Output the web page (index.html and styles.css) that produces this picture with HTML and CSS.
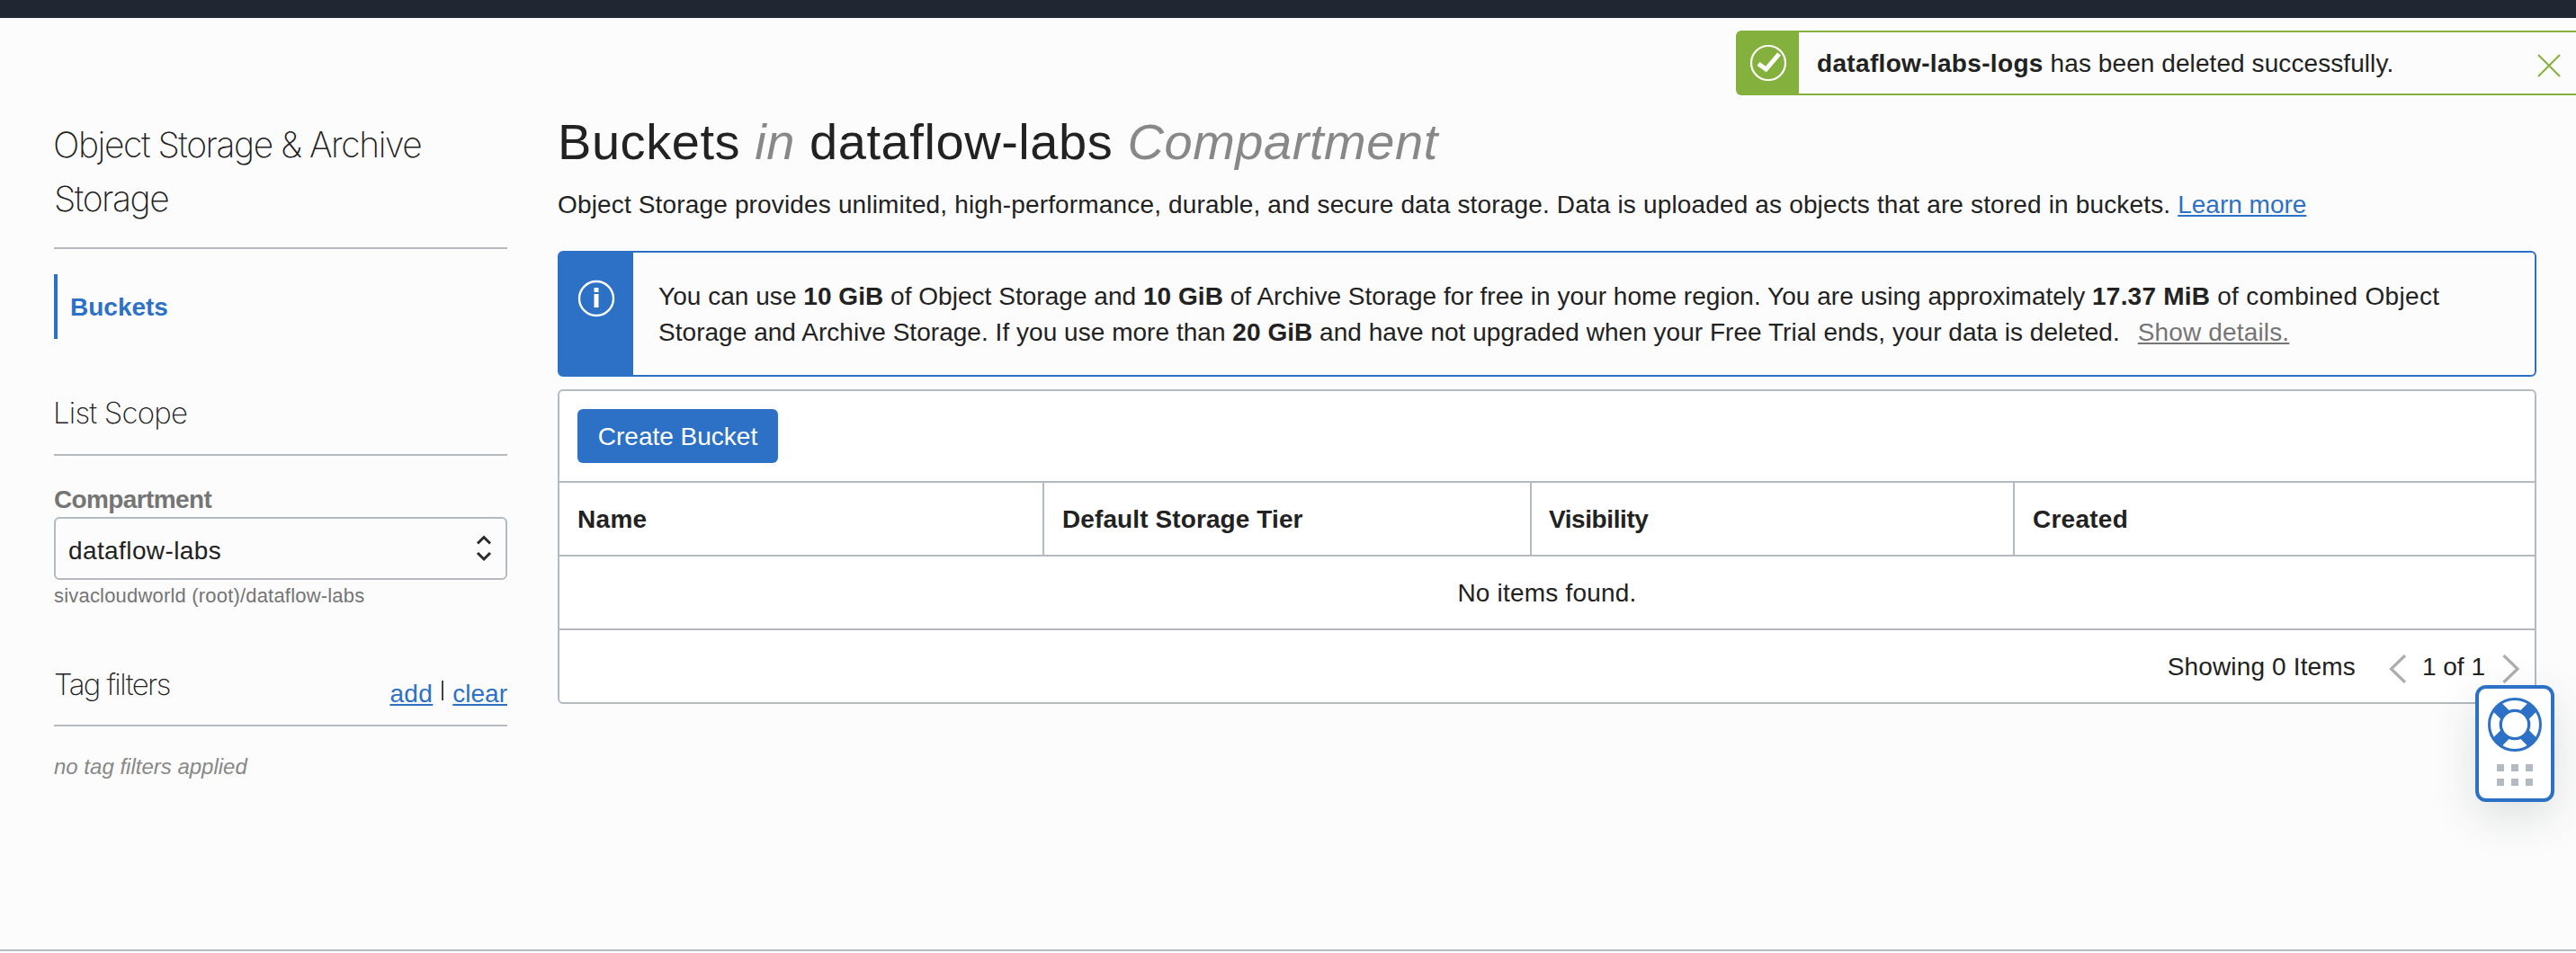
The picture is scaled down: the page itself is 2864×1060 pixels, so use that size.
FILE: index.html
```html
<!DOCTYPE html>
<html lang="en">
<head>
<meta charset="utf-8">
<title>Buckets</title>
<link rel="stylesheet" href="styles.css">
</head>
<body>
<div class="page">
  <header class="topbar"></header>
  <div class="columns">
    <aside class="sidebar">
      <h2 class="service">Object Storage &amp; Archive<br>Storage</h2>
      <nav class="nav"><a class="nav-item">Buckets</a></nav>
      <h3 class="section">List Scope</h3>
      <label class="label">Compartment</label>
      <div class="select"><span class="select-value">dataflow-labs</span>
        <svg class="select-arrows" viewBox="0 0 18 32" width="18" height="32"><path d="M2 10.500 9 3.500l7 7M2 21l7 7 7-7"/></svg>
      </div>
      <p class="path">sivacloudworld (root)/dataflow-labs</p>
      <div class="tags">
        <h3 class="tags-title">Tag filters</h3>
        <div class="tags-links"><a class="link add">add</a><i class="bar"></i><a class="link">clear</a></div>
      </div>
      <p class="note">no tag filters applied</p>
    </aside>
    <main class="main">
      <h1 class="title">Buckets <em>in</em> dataflow-labs <em>Compartment</em></h1>
      <p class="desc"><span class="desc-text">Object Storage provides unlimited, high-performance, durable, and secure data storage. Data is uploaded as objects that are stored in buckets. </span><a class="link">Learn more</a></p>
      <section class="info">
        <div class="info-icon"><svg viewBox="0 0 42 42" width="42" height="42"><circle cx="21" cy="21" r="19" fill="none" stroke="#fff" stroke-width="2.4"/><path fill="#fff" d="M18.500 9h5v5h-5zM18.500 16h5v15h-5z"/></svg></div>
        <p class="info-text">You can use <b>10 GiB</b> of Object Storage and <b>10 GiB</b> of Archive Storage for free in your home region. You are using approximately <b class="usage">17.37 MiB</b><span class="combined"> of combined Object</span><br>Storage and Archive Storage. If you use more than <b>20 GiB</b> and have not upgraded when your Free Trial ends, your data is deleted.<a class="details">Show details.</a></p>
      </section>
      <section class="table">
        <div class="toolbar"><button class="create">Create Bucket</button></div>
        <div class="row head"><div class="cell name">Name</div><div class="cell tier">Default Storage Tier</div><div class="cell visibility">Visibility</div><div class="cell created">Created</div></div>
        <div class="row empty">No items found.</div>
        <div class="row pager"><span class="count">Showing 0 Items</span>
          <svg class="prev" viewBox="0 0 20 32" width="20" height="32"><path d="M18 1 2.500 16 18 31"/></svg>
          <span class="pages">1 of 1</span>
          <svg class="next" viewBox="0 0 20 32" width="20" height="32"><path d="M1.500 1 17 16 1.500 31"/></svg>
        </div>
      </section>
    </main>
  </div>
  <footer class="footer"></footer>
  <div class="toast">
    <div class="toast-icon"><svg viewBox="0 0 42 42" width="42" height="42"><circle cx="21" cy="21" r="19" fill="none" stroke="#fff" stroke-width="2.2"/><path fill="none" stroke="#fff" stroke-width="5" d="m10 22 8.500 6L33 11"/></svg></div>
    <p class="toast-text"><b>dataflow-labs-logs</b> has been deleted successfully.</p>
    <svg class="close" viewBox="0 0 26 26" width="26" height="26"><path d="m1 1 24 24M25 1 1 25"/></svg>
  </div>
  <div class="help">
    <svg viewBox="-30 -30 60 60" width="60" height="60" fill="none" stroke="#2d71c7"><path stroke-width="13.500" d="m-19.500-19.500 39 39M19.500-19.500l-39 39"/><circle r="28.500" stroke-width="3"/><circle r="15.700" fill="#fff" stroke-width="3.300"/></svg>
    <div class="dots"><i></i><i></i><i></i><i></i><i></i><i></i></div>
  </div>
</div>
</body>
</html>
```
FILE: styles.css
```css
* { box-sizing: border-box; margin: 0; padding: 0; }
body { background: #fcfcfc; color: #222; font: 28px/40px "Liberation Sans", Arial, sans-serif; }
.page { position: relative; display: flex; flex-direction: column; height: 1060px; overflow: hidden; }
.topbar { height: 20px; background: #202632; }
.columns { display: grid; grid-template-columns: 504px 2200px; gap: 56px; padding-left: 60px; }
.footer { margin-top: auto; height: 4px; border-top: 2px solid #b4bac1; }
.link { color: #2d71c7; text-decoration: underline; text-decoration-thickness: 2px; text-underline-offset: 2px; }

.sidebar { padding-top: 111px; }
.service { height: 146px; border-bottom: 2px solid #b4bac1; font: 200 39px/60px Inter, sans-serif; letter-spacing: -1.43px; text-indent: -1px; white-space: nowrap; }
.nav { margin-top: 28px; }
.nav-item { display: block; height: 72px; padding-left: 14px; border-left: 4px solid #2d71c7; color: #2d71c7; font-weight: 700; line-height: 74px; }
.section { margin-top: 57px; height: 73px; border-bottom: 2px solid #b4bac1; font: 200 33px/50px Inter, sans-serif; letter-spacing: -.8px; text-indent: -1px; }
.label { display: block; margin-top: 32px; color: #757575; font-weight: 700; line-height: 34px; letter-spacing: -.62px; }
.select { display: flex; justify-content: space-between; align-items: center; margin-top: 2px; height: 70px; padding: 0 15px 0 14px; border: 2px solid #b4bac1; border-radius: 6px; }
.select-value { padding-top: 6px; letter-spacing: .4px; }
.select-arrows { fill: none; stroke: #2a2a2a; stroke-width: 3; }
.path { margin-top: 3px; color: #757575; font-size: 22px; line-height: 30px; letter-spacing: .19px; }
.tags { display: flex; justify-content: space-between; margin-top: 58px; height: 72px; border-bottom: 2px solid #b4bac1; }
.tags-title { font: 200 33px/50px Inter, sans-serif; letter-spacing: -1.6px; }
.tags-links { display: flex; padding-top: 16px; }
.add { letter-spacing: .4px; }
.bar { width: 2px; height: 22px; margin: 5px 10px 0; background: #444; }
.note { margin-top: 27px; color: #888; font-size: 24px; font-style: italic; line-height: 36px; }

.main { padding-top: 103px; }
.title { font-size: 56px; font-weight: 400; line-height: 70px; letter-spacing: .56px; white-space: nowrap; }
.title em { color: #888; }
.desc { margin-top: 15px; white-space: nowrap; }
.desc-text { letter-spacing: .155px; }
.info { display: flex; height: 140px; margin-top: 31px; border: 2px solid #2d71c7; border-radius: 6px; }
.info-icon { width: 82px; padding: 30px 0 0 20px; background: #2d71c7; }
.info-text { padding: 29px 0 0 28px; letter-spacing: .035px; white-space: nowrap; }
.usage { letter-spacing: .2px; }
.combined { letter-spacing: .33px; }
.details { margin-left: 20px; color: #757575; letter-spacing: .15px; text-decoration: underline; text-decoration-thickness: 2px; text-underline-offset: 2px; }
.table { margin-top: 14px; border: 2px solid #b4bac1; border-radius: 6px; background: #fff; }
.toolbar { display: flex; padding: 20px; }
.create { width: 223px; height: 60px; padding-top: 2px; border: 0; border-radius: 6px; background: #2d71c7; color: #fff; font: inherit; }
.row { height: 82px; border-top: 2px solid #b4bac1; line-height: 82px; }
.head { display: grid; grid-template-columns: 539px 542px 537px 1fr; font-weight: 700; }
.cell { height: 80px; padding-left: 20px; border-right: 2px solid #b4bac1; }
.cell:last-child { border-right: 0; }
.name { letter-spacing: .3px; }
.tier { letter-spacing: .1px; }
.visibility { padding-left: 19px; letter-spacing: -.42px; }
.created { letter-spacing: .25px; }
.empty { text-align: center; letter-spacing: .2px; }
.pager { display: flex; align-items: center; justify-content: flex-end; padding-right: 16px; }
.count, .pages { padding-top: 2px; }
.count { letter-spacing: .15px; }
.prev { margin: 6px 17px 0 37px; }
.next { margin: 6px 0 0 19px; }
.prev, .next { fill: none; stroke: #adadad; stroke-width: 3.2; }

.toast { position: absolute; top: 34px; left: 1930px; right: 0; display: flex; height: 72px; border: 2px solid #84b13d; border-right: 0; border-radius: 6px 0 0 6px; background: #fcfcfc; }
.toast-icon { width: 68px; padding: 13px 0 0 13px; background: #84b13d; }
.toast-text { padding: 15px 0 0 20px; letter-spacing: .08px; white-space: nowrap; }
.toast-text b { letter-spacing: .33px; }
.close { margin: 24px 17px 0 auto; fill: none; stroke: #84b13d; stroke-width: 2; }
.help { position: absolute; top: 762px; left: 2752px; display: flex; flex-direction: column; align-items: center; width: 88px; height: 130px; padding-top: 10px; border: 4px solid #2d71c7; border-radius: 12px; background: #fff; box-shadow: 0 16px 48px rgba(50, 60, 60, .15); }
.dots { display: grid; grid-template-columns: repeat(3, 8px); gap: 8px; margin-top: 14px; }
.dots i { height: 8px; background: #b4bac1; }
```
